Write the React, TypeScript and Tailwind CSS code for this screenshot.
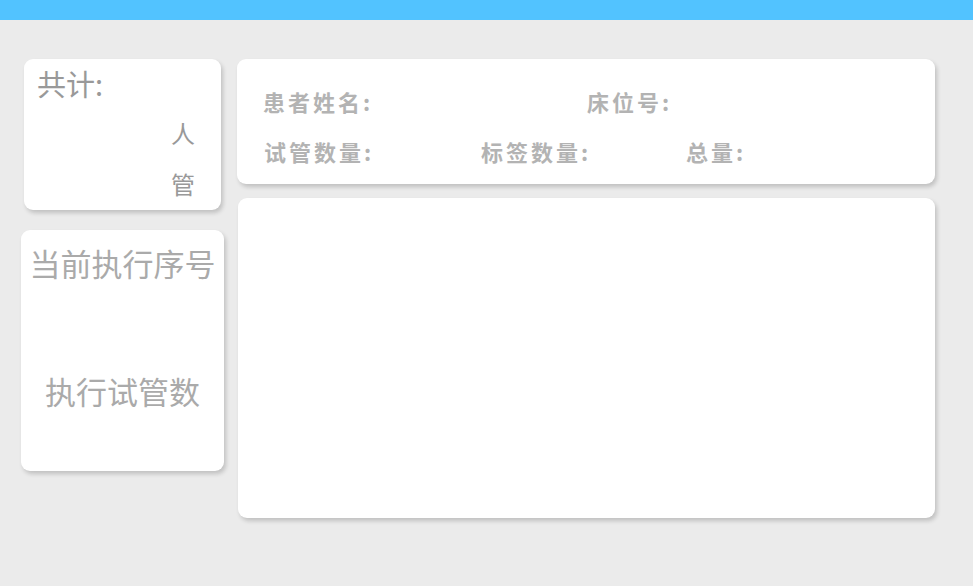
export default function App() {
  const font = { fontFamily: '"Noto Sans CJK SC", "Noto Sans", sans-serif' }
  return (
    <div className="w-full h-[586px] bg-[#ebebeb] overflow-hidden" style={font}>
      <div className="h-[20px] bg-[#52c3ff]" />
      <div className="flex pt-[39px]">
        {/* left column */}
        <div className="ml-[21px] w-[203px] flex flex-col">
          <div className="mx-[3px] h-[151px] bg-white rounded-[9px] shadow-[2px_3px_4px_rgba(0,0,0,0.18)] relative">
            <div className="absolute left-[13px] top-[5px] text-[29px] leading-[38px] text-[#999]">共计:</div>
            <div className="absolute left-[147px] top-[58px] text-[24px] leading-[32px] text-[#999]">人</div>
            <div className="absolute left-[147px] top-[109px] text-[24px] leading-[32px] text-[#999]">管</div>
          </div>
          <div className="mt-[20px] h-[241px] bg-white rounded-[9px] shadow-[2px_3px_4px_rgba(0,0,0,0.18)] flex flex-col items-center">
            <div className="mt-[12px] text-[31px] leading-[42px] text-[#aaa]">当前执行序号</div>
            <div className="mt-[86px] text-[31px] leading-[42px] text-[#aaa]">执行试管数</div>
          </div>
        </div>
        {/* right column */}
        <div className="ml-[13px] w-[698px] flex flex-col">
          <div className="h-[125px] bg-white rounded-[9px] shadow-[2px_3px_4px_rgba(0,0,0,0.18)] text-[22px] leading-[28px] font-bold text-[#b3b3b3] tracking-[3px]">
            <div className="flex pt-[28px]">
              <div className="ml-[26px] w-[324px]">患者姓名:</div>
              <div>床位号:</div>
            </div>
            <div className="flex mt-[22px]">
              <div className="ml-[27px] w-[217px]">试管数量:</div>
              <div className="w-[205px]">标签数量:</div>
              <div>总量:</div>
            </div>
          </div>
          <div className="mt-[14px] ml-[1px] h-[320px] bg-white rounded-[9px] shadow-[2px_3px_4px_rgba(0,0,0,0.18)]" />
        </div>
      </div>
    </div>
  )
}
